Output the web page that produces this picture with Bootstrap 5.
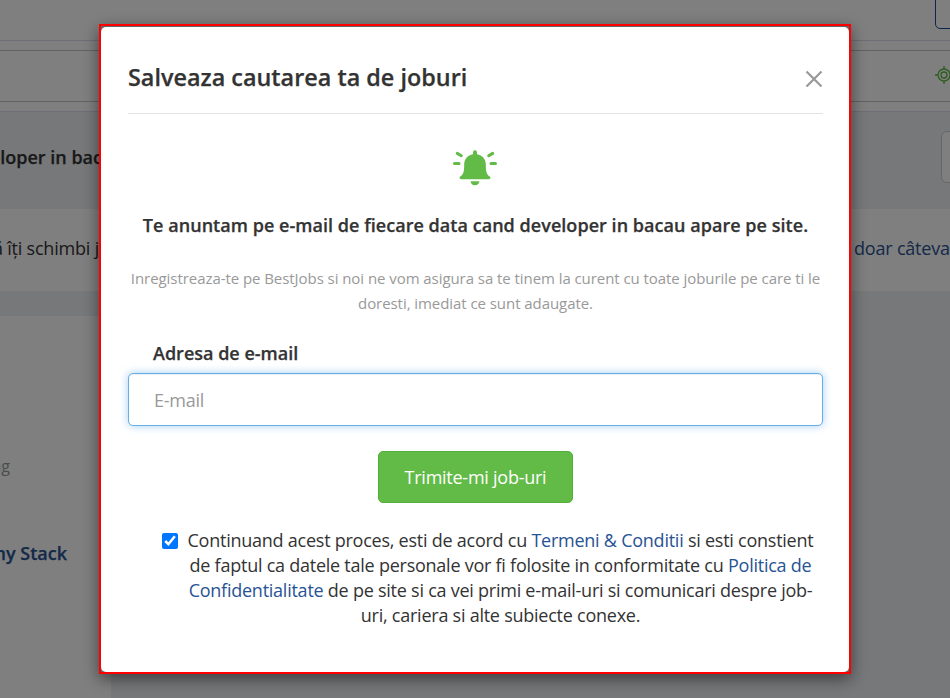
<!DOCTYPE html>
<html lang="ro">
<head>
<meta charset="utf-8">
<meta name="viewport" content="width=device-width, initial-scale=1">
<title>Salveaza cautarea</title>
<link href="https://cdn.jsdelivr.net/npm/bootstrap@5.3.0/dist/css/bootstrap.min.css" rel="stylesheet">
<style>
body{font-family:"Open Sans",sans-serif;font-size:18px;line-height:25px;color:#333;background:#eff1f4;height:698px;overflow:hidden}
a{color:#285394;text-decoration:none}
.topbar{height:41px;border-bottom:1px solid #dcdcee}
.login-btn{width:120px;height:39px;margin:-10px -105px 0 0;border:1px solid #1d4b96;border-radius:5px}
.searchbar{height:71px;padding:9px 0;border-bottom:1px solid #dcdcee}
.searchfield{height:52px;border-top:1px solid #c4c4c8;border-bottom:1px solid #c4c4c8}
.searchfield svg{margin:-2px -2px 0 0}
.heading-row{height:97px}
.heading-row b{width:102px;margin-top:-7px}
.sort-btn{width:80px;height:52px;margin:-7px -71px 0 0;border:1px solid #ccced2;border-radius:6px}
.notice{height:82px;padding-bottom:3px;letter-spacing:-.2px}
.notice span{width:99px}
.notice a{width:96px}
.clip-left{display:flex;justify-content:flex-end;white-space:nowrap}
.results{width:111px;height:382px;margin-top:25px;padding-top:138px}
.results .tag{width:10px;font-size:16px;color:#999}
.results .job{width:67px;margin-top:62px}
.fw-semibold,.dialog-head h1,.lead-line,.mail-label{-webkit-text-stroke:.25px currentColor}
.shade{background:rgba(0,0,0,.5);z-index:10}
.dialog-frame{z-index:20;left:99px;top:24px;width:752px;height:650px;border:2px solid red;box-shadow:0 5px 15px rgba(0,0,0,.5);background:#666}
.dialog-frame .modal-content{height:645px;margin-top:1px;border:0;border-radius:5px;padding:0 26px 0 27px;color:#333;background:#fff}
.dialog-head{height:87px;border-bottom:1px solid #e2e2e2;padding-top:15px}
.dialog-head h1{font-size:23.4px;font-weight:600;line-height:32px;position:relative;top:-1px}
.close-x{width:18px;height:18px;background:none}
.bell{width:44px;height:36px;margin-top:36px;position:relative;left:-.5px}
.lead-line{font-weight:600;margin-top:27px;white-space:nowrap;letter-spacing:.04px}
.hint{font-size:15px;color:#999;margin-top:28px;margin-bottom:0;white-space:nowrap;letter-spacing:-.06px}
.mail-label{font-weight:600;margin:25px 0 7px 25px}
.mail-input.form-control{height:53px;border:1px solid #66afe9;border-radius:5px;padding:6px 25px;font-size:18px;letter-spacing:-.25px;box-shadow:inset 0 1px 1px rgba(0,0,0,.075),0 0 8px rgba(102,175,233,.6)}
.mail-input.form-control::placeholder{color:#999}
.send-btn.btn{width:195px;height:52px;margin-top:25px;background:#61bb46;border:1px solid #52af38;border-radius:5px;color:#fff;font-size:18px;padding:0;letter-spacing:-.25px}
.terms{margin:25px 0 0 34px}
.terms input{width:16px;height:16px;margin:5px 9px 0 0;accent-color:#0075ff}
.terms label{width:627px;white-space:nowrap;letter-spacing:-.245px}
</style>
</head>
<body>
<header class="bg-white">
  <div class="topbar d-flex justify-content-end overflow-hidden"><div class="login-btn flex-shrink-0"></div></div>
  <div class="searchbar">
    <div class="searchfield d-flex align-items-center justify-content-end overflow-hidden">
      <svg width="17" height="18" viewBox="0 0 17 18" fill="none" stroke="#5aba3e" stroke-width="1.3"><circle cx="9" cy="9" r="6"/><circle cx="9" cy="9" r="3"/><path d="M9 0v3M9 15v3M0 9h3M15 9h3"/></svg>
    </div>
  </div>
</header>
<div class="heading-row d-flex align-items-center justify-content-between overflow-hidden">
  <b class="clip-left fw-semibold">developer in bac</b>
  <div class="sort-btn bg-white flex-shrink-0"></div>
</div>
<div class="notice bg-white d-flex align-items-center justify-content-between overflow-hidden">
  <span class="clip-left">să îți schimbi j</span>
  <a href="#" class="text-nowrap">doar câteva</a>
</div>
<main class="results bg-white overflow-hidden">
  <div class="tag clip-left">ng</div>
  <a href="#" class="job clip-left fw-semibold">any Stack</a>
</main>

<div class="shade position-fixed top-0 start-0 w-100 h-100"></div>
<div class="dialog-frame position-fixed" role="dialog" aria-modal="true">
  <div class="modal-content">
    <div class="dialog-head d-flex justify-content-between align-items-center">
      <h1 class="m-0">Salveaza cautarea ta de joburi</h1>
      <button class="close-x border-0 p-0 d-flex" aria-label="Inchide"><svg width="18" height="18" viewBox="0 0 18 18" stroke="#999" stroke-width="2.2"><path d="M1.500 2.500 16.500 17.500M16.500 2.500 1.500 17.500"/></svg></button>
    </div>
    <svg class="bell mx-auto d-block flex-shrink-0" viewBox="0 0 44 36" fill="#61bb46"><path d="M20 2.300a2 2 0 0 1 4 0v1.900c5.500 1 8.800 5 8.800 10.200 0 7 .6 9.700 4 12.200 1.200 1 .8 2.600-.8 2.600H8c-1.600 0-2-1.600-.8-2.600 3.400-2.500 4-5.200 4-12.200C11.200 9.200 14.500 5.200 20 4.200zM17.600 31.200h8.800c-.3 2.500-2 4.100-4.400 4.100s-4.100-1.600-4.400-4.100z"/><path d="M4.300 3.400 8.300 5.700M39.700 3.400 35.700 5.700M1.500 13.500H6M42.500 13.500H38" fill="none" stroke="#61bb46" stroke-width="3" stroke-linecap="round"/></svg>
    <div class="lead-line text-center">Te anuntam pe e-mail de fiecare data cand developer in bacau apare pe site.</div>
    <p class="hint text-center">Inregistreaza-te pe BestJobs si noi ne vom asigura sa te tinem la curent cu toate joburile pe care ti le<br>doresti, imediat ce sunt adaugate.</p>
    <label class="mail-label" for="mail">Adresa de e-mail</label>
    <input id="mail" type="email" class="form-control mail-input" placeholder="E-mail">
    <button class="btn send-btn mx-auto">Trimite-mi job-uri</button>
    <div class="terms d-flex align-items-start">
      <input type="checkbox" id="agree" checked>
      <label for="agree" class="text-center">Continuand acest proces, esti de acord cu <a href="#">Termeni &amp; Conditii</a> si esti constient<br>de faptul ca datele tale personale vor fi folosite in conformitate cu <a href="#">Politica de<br>Confidentialitate</a> de pe site si ca vei primi e-mail-uri si comunicari despre job-<br>uri, cariera si alte subiecte conexe.</label>
    </div>
  </div>
</div>
<script src="https://cdn.jsdelivr.net/npm/bootstrap@5.3.0/dist/js/bootstrap.bundle.min.js"></script>
</body>
</html>
